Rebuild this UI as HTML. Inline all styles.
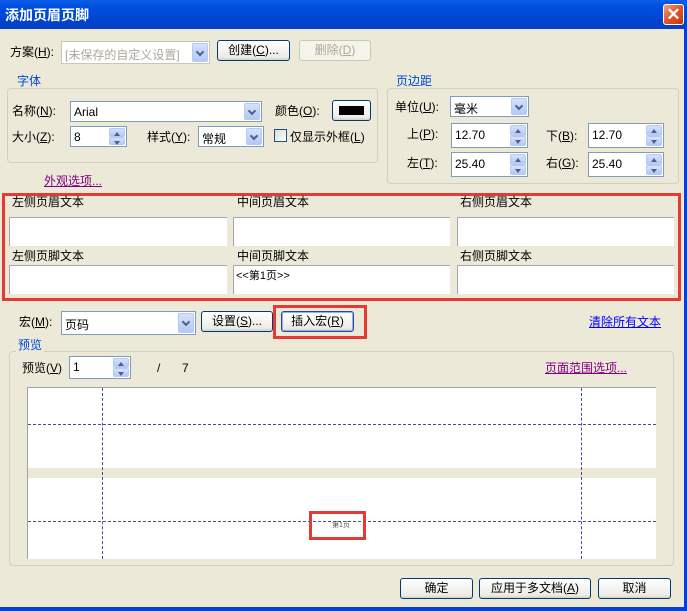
<!DOCTYPE html>
<html><head><meta charset="utf-8"><style>
*{box-sizing:border-box;margin:0;padding:0}
body{width:687px;height:611px;overflow:hidden;background:#ECE9D8;position:relative;font-family:"Liberation Sans","Noto Sans CJK SC","WenQuanYi Zen Hei",sans-serif;font-size:12px;color:#000}
.a{position:absolute;white-space:nowrap}
.t{line-height:14px}
.box{position:absolute;background:#fff;border:1px solid #7F9DB9}
.dis{background:#fff;border-color:#C9C7BA;color:#ACA899}
.dd{position:absolute;right:1px;top:1px;bottom:1px;width:16px;background:linear-gradient(#D5E1FC,#B5C8F6);border:1px solid #B6C9F5;border-radius:2px}
.dd:after{content:"";position:absolute;left:4px;top:45%;width:4px;height:4px;border-right:2px solid #4D6185;border-bottom:2px solid #4D6185;transform:translateY(-50%) rotate(45deg)}
.sp{position:absolute;right:1px;top:1px;bottom:1px;width:16px}
.sp i{position:absolute;left:0;right:0;height:50%;background:linear-gradient(#D5E1FC,#B5C8F6);border:1px solid #B6C9F5;border-radius:2px}
.sp i:nth-child(1){top:0}.sp i:nth-child(2){bottom:0}
.sp i:after{content:"";position:absolute;left:4px;border-left:3px solid transparent;border-right:3px solid transparent}
.sp i:nth-child(1):after{top:3px;border-bottom:4px solid #4D6185}
.sp i:nth-child(2):after{top:3px;border-top:4px solid #4D6185}
.btn{position:absolute;border:1px solid #003C74;border-radius:3px;background:linear-gradient(#FFFFFF,#ECEBE6 85%,#D6D0C5);text-align:center;line-height:18px}
.grp{position:absolute;border:1px solid #D0D0BF;border-radius:4px}
.gl{position:absolute;background:#ECE9D8;color:#0046D5;padding:0 2px;line-height:14px}
.tb{position:absolute;background:#fff;border-top:1px solid #A7A6AA;border-left:1px solid #A7A6AA}
u{text-decoration:underline}
</style></head><body>
<div class="a" style="left:0;top:0;width:687px;height:29px;background:linear-gradient(#0A5FE8,#0050E0 20%,#0042CC 80%,#0A3FC0);"></div>
<div class="a" style="left:5px;top:6px;color:#fff;font-weight:bold;font-size:14px;line-height:18px">添加页眉页脚</div>
<div class="a" style="left:663px;top:4px;width:21px;height:21px;border:1px solid #fff;border-radius:3px;background:linear-gradient(135deg,#F0A080,#E0542A 50%,#C03810);color:#fff;font-size:17px;line-height:19px;text-align:center;font-weight:bold">✕</div>
<div class="a" style="left:684px;top:29px;width:3px;height:582px;background:#0841D0"></div>
<div class="a" style="left:0;top:607px;width:687px;height:4px;background:#0841D0"></div>

<div class="a t" style="left:10px;top:45px">方案(<u>H</u>):</div>
<div class="box dis" style="left:61px;top:41px;width:149px;height:23px"><span class="a" style="left:3px;top:4px">[未保存的自定义设置]</span><div class="dd"></div></div>
<div class="btn" style="left:217px;top:40px;width:73px;height:21px">创建(<u>C</u>)...</div>
<div class="btn" style="left:299px;top:40px;width:72px;height:21px;border-color:#C9C7BA;color:#ACA899;background:#F5F4EA">删除(<u>D</u>)</div>

<div class="grp" style="left:7px;top:88px;width:371px;height:75px"></div>
<div class="gl" style="left:15px;top:74px">字体</div>
<div class="a t" style="left:12px;top:104px">名称(<u>N</u>):</div>
<div class="box" style="left:70px;top:101px;width:192px;height:21px"><span class="a" style="left:3px;top:3px">Arial</span><div class="dd"></div></div>
<div class="a t" style="left:275px;top:104px">颜色(<u>O</u>):</div>
<div class="btn" style="left:332px;top:100px;width:39px;height:21px"><div class="a" style="left:6px;top:5px;width:25px;height:9px;background:#000"></div></div>
<div class="a t" style="left:12px;top:130px">大小(<u>Z</u>):</div>
<div class="box" style="left:70px;top:126px;width:57px;height:21px"><span class="a" style="left:3px;top:3px">8</span><div class="sp"><i></i><i></i></div></div>
<div class="a t" style="left:147px;top:130px">样式(<u>Y</u>):</div>
<div class="box" style="left:198px;top:126px;width:66px;height:21px"><span class="a" style="left:3px;top:3px">常规</span><div class="dd"></div></div>
<div class="a" style="left:274px;top:129px;width:13px;height:13px;border:1px solid #1C5180;background:linear-gradient(135deg,#DCDBD5,#fff)"></div>
<div class="a t" style="left:290px;top:130px">仅显示外框(<u>L</u>)</div>

<div class="grp" style="left:387px;top:88px;width:292px;height:96px"></div>
<div class="gl" style="left:394px;top:74px">页边距</div>
<div class="a t" style="left:395px;top:100px">单位(<u>U</u>):</div>
<div class="box" style="left:450px;top:96px;width:79px;height:21px"><span class="a" style="left:3px;top:3px">毫米</span><div class="dd"></div></div>
<div class="a t" style="left:407px;top:127px">上(<u>P</u>):</div>
<div class="box" style="left:451px;top:123px;width:77px;height:25px"><span class="a" style="left:3px;top:4px">12.70</span><div class="sp"><i></i><i></i></div></div>
<div class="a t" style="left:546px;top:129px">下(<u>B</u>):</div>
<div class="box" style="left:588px;top:123px;width:76px;height:25px"><span class="a" style="left:3px;top:4px">12.70</span><div class="sp"><i></i><i></i></div></div>
<div class="a t" style="left:407px;top:156px">左(<u>T</u>):</div>
<div class="box" style="left:451px;top:152px;width:77px;height:25px"><span class="a" style="left:3px;top:4px">25.40</span><div class="sp"><i></i><i></i></div></div>
<div class="a t" style="left:546px;top:156px">右(<u>G</u>):</div>
<div class="box" style="left:588px;top:152px;width:76px;height:25px"><span class="a" style="left:3px;top:4px">25.40</span><div class="sp"><i></i><i></i></div></div>
<div class="a t" style="left:44px;top:174px;color:#800080;text-decoration:underline">外观选项...</div>

<div class="a" style="left:2px;top:193px;width:679px;height:108px;border:3px solid #E53935"></div>
<div class="a t" style="left:12px;top:195px">左侧页眉文本</div>
<div class="a t" style="left:237px;top:195px">中间页眉文本</div>
<div class="a t" style="left:460px;top:195px">右侧页眉文本</div>
<div class="tb" style="left:9px;top:217px;width:218px;height:29px"></div>
<div class="tb" style="left:233px;top:217px;width:217px;height:29px"></div>
<div class="tb" style="left:457px;top:217px;width:217px;height:29px"></div>
<div class="a t" style="left:12px;top:249px">左侧页脚文本</div>
<div class="a t" style="left:237px;top:249px">中间页脚文本</div>
<div class="a t" style="left:460px;top:249px">右侧页脚文本</div>
<div class="tb" style="left:9px;top:265px;width:218px;height:29px"></div>
<div class="tb" style="left:233px;top:265px;width:217px;height:29px"><span class="a" style="left:2px;top:1px;font-size:11px">&lt;&lt;第1页&gt;&gt;</span></div>
<div class="tb" style="left:457px;top:265px;width:217px;height:29px"></div>

<div class="a t" style="left:19px;top:315px">宏(<u>M</u>):</div>
<div class="box" style="left:61px;top:311px;width:135px;height:24px"><span class="a" style="left:3px;top:4px">页码</span><div class="dd"></div></div>
<div class="btn" style="left:201px;top:311px;width:72px;height:21px">设置(<u>S</u>)...</div>
<div class="a" style="left:273px;top:305px;width:94px;height:34px;border:3px solid #E53935"></div>
<div class="btn" style="left:281px;top:311px;width:73px;height:21px;border-color:#2C4A8A;box-shadow:inset 0 0 0 1px #8CB4F2">插入宏(<u>R</u>)</div>
<div class="a t" style="left:589px;top:315px;color:#0000FF;text-decoration:underline">清除所有文本</div>

<div class="grp" style="left:9px;top:351px;width:665px;height:215px"></div>
<div class="gl" style="left:16px;top:338px">预览</div>
<div class="a t" style="left:22px;top:361px">预览(<u>V</u>)</div>
<div class="box" style="left:69px;top:356px;width:62px;height:23px"><span class="a" style="left:3px;top:3px">1</span><div class="sp"><i></i><i></i></div></div>
<div class="a t" style="left:157px;top:361px">/</div>
<div class="a t" style="left:182px;top:361px">7</div>
<div class="a t" style="left:545px;top:361px;color:#800080;text-decoration:underline">页面范围选项...</div>

<div class="a" style="left:27px;top:387px;width:629px;height:172px;background:#fff;border-top:1px solid #A0A0A0;border-left:1px solid #A0A0A0"></div>
<div class="a" style="left:28px;top:468px;width:628px;height:10px;background:#ECE9D8"></div>
<div class="a" style="left:28px;top:424px;width:628px;border-top:1px dashed #4A4A9A"></div>
<div class="a" style="left:28px;top:521px;width:628px;border-top:1px dashed #4A4A9A"></div>
<div class="a" style="left:102px;top:388px;height:171px;border-left:1px dashed #4A4A9A"></div>
<div class="a" style="left:581px;top:388px;height:171px;border-left:1px dashed #4A4A9A"></div>
<div class="a" style="left:332px;top:521px;font-size:7px;color:#555;line-height:9px">第1页</div>
<div class="a" style="left:309px;top:511px;width:57px;height:29px;border:3px solid #E53935"></div>

<div class="btn" style="left:400px;top:578px;width:73px;height:21px">确定</div>
<div class="btn" style="left:479px;top:578px;width:112px;height:21px">应用于多文档(<u>A</u>)</div>
<div class="btn" style="left:598px;top:578px;width:73px;height:21px">取消</div>
</body></html>
